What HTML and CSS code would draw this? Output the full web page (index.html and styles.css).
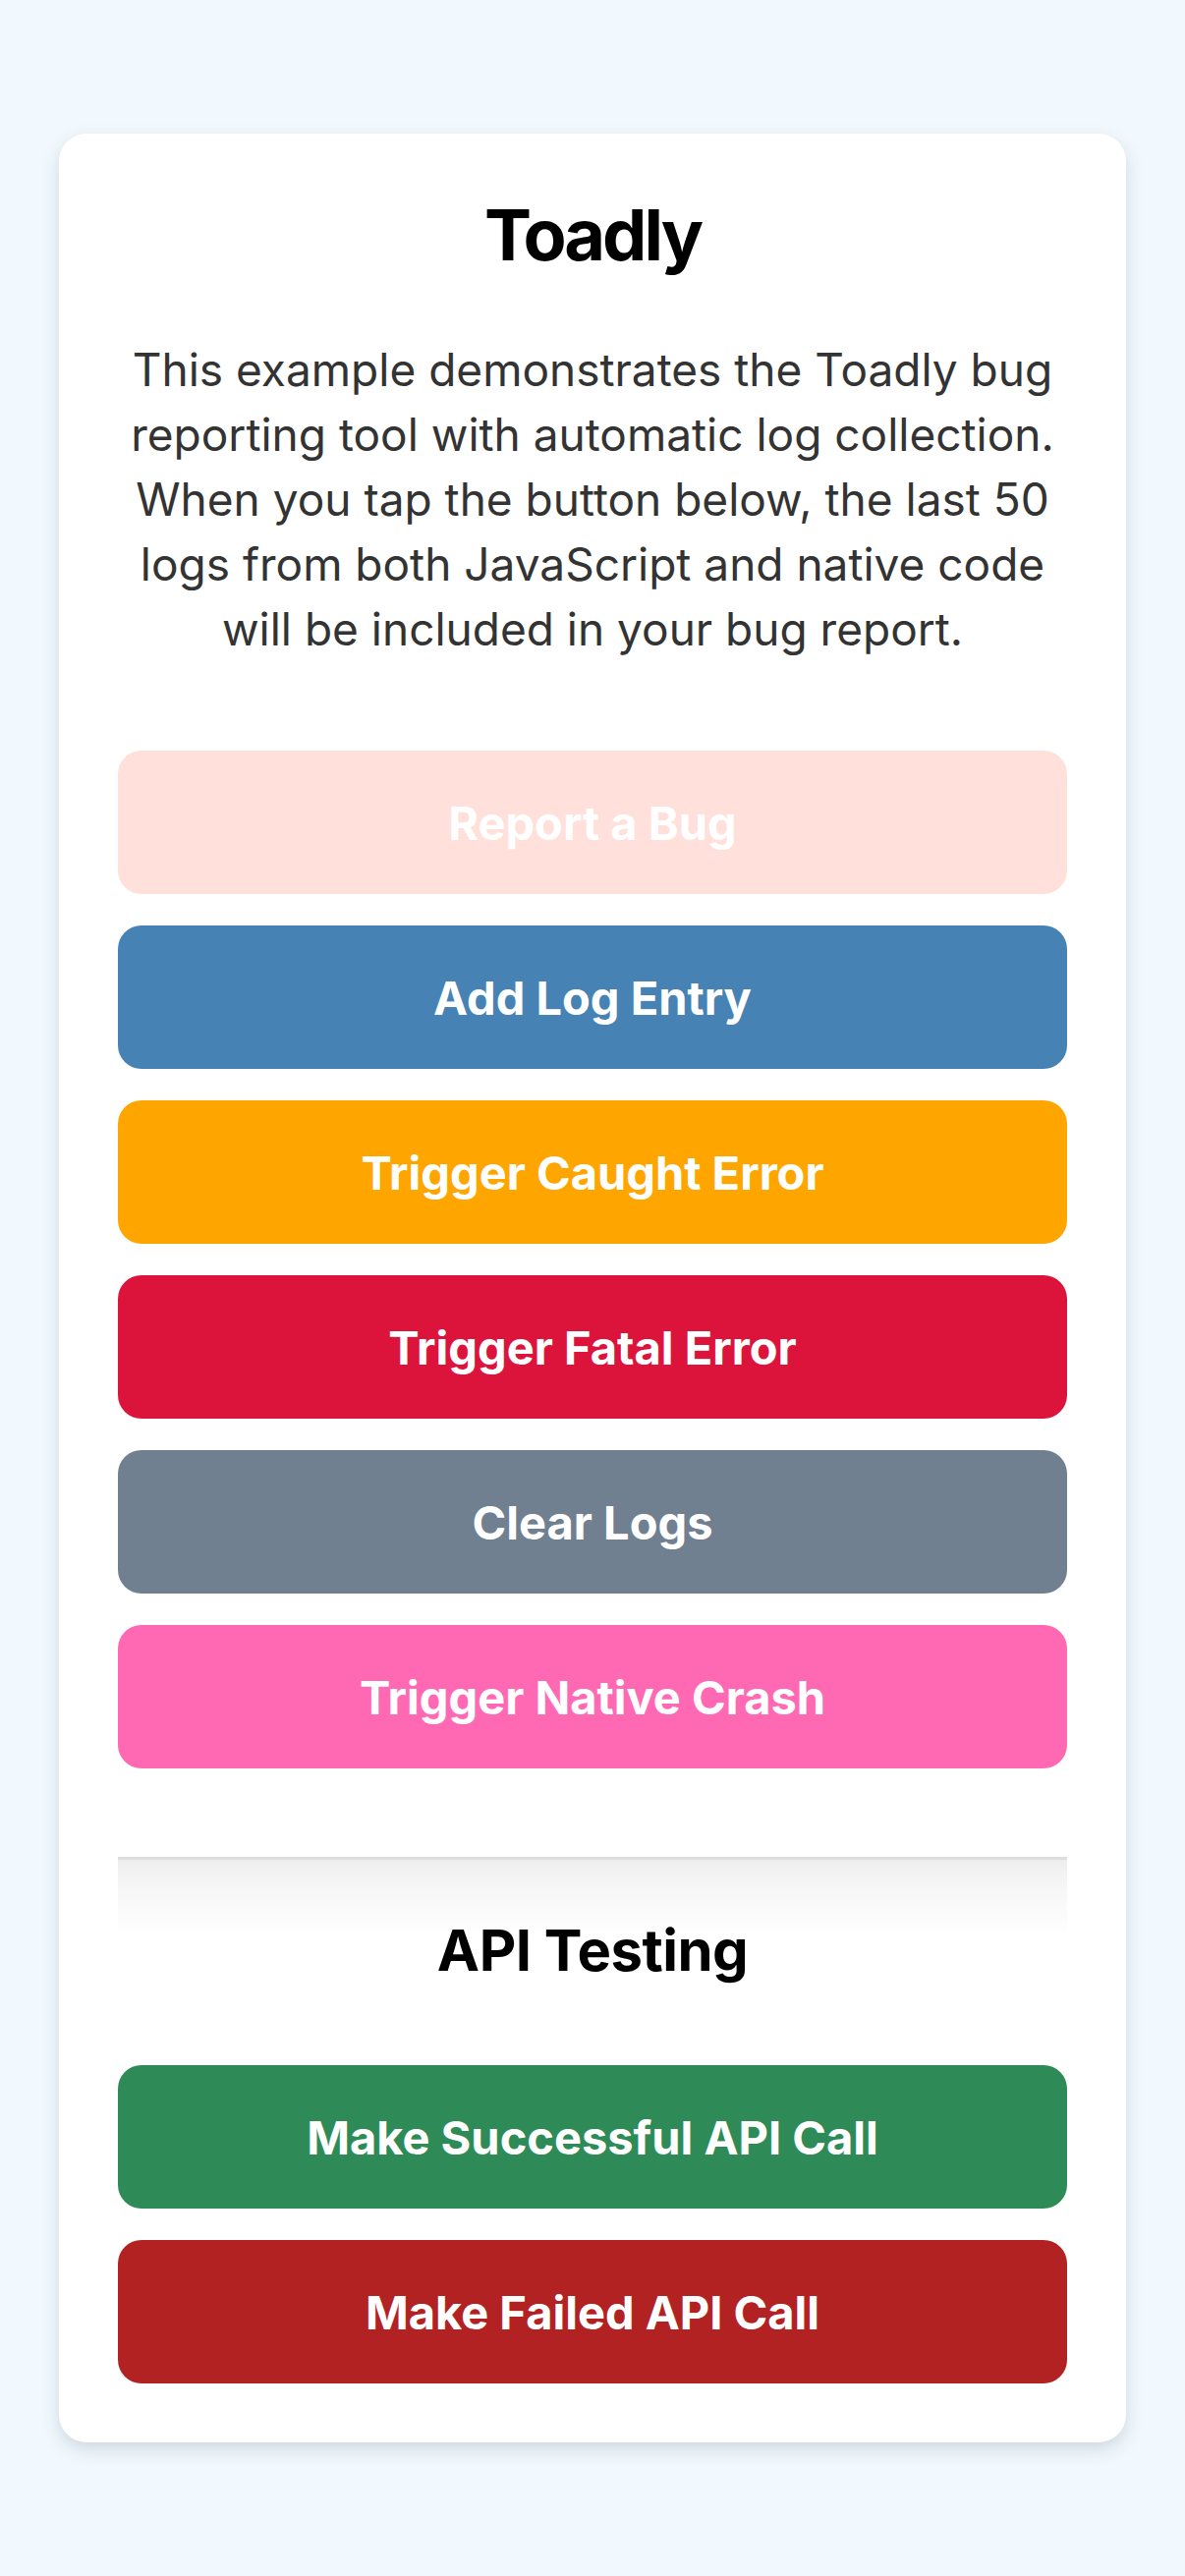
FILE: index.html
```html
<!DOCTYPE html>
<html lang="en">
<head>
<meta charset="utf-8">
<title>Toadly</title>
<link rel="stylesheet" href="styles.css">
</head>
<body>
<main class="screen">
  <section class="card">
    <h1 class="title">Toadly</h1>
    <p class="intro">This example demonstrates the Toadly bug reporting tool with automatic log collection. When you tap the button below, the last 50 logs from both JavaScript and native code will be included in your bug report.</p>
    <div class="buttons">
      <button class="btn btn-report" disabled>Report a Bug</button>
      <button class="btn btn-log">Add Log Entry</button>
      <button class="btn btn-caught">Trigger Caught Error</button>
      <button class="btn btn-fatal">Trigger Fatal Error</button>
      <button class="btn btn-clear">Clear Logs</button>
      <button class="btn btn-native">Trigger Native Crash</button>
    </div>
    <div class="api-section">
      <h2 class="subtitle">API Testing</h2>
      <div class="buttons">
        <button class="btn btn-success">Make Successful API Call</button>
        <button class="btn btn-failed">Make Failed API Call</button>
      </div>
    </div>
  </section>
</main>
</body>
</html>
```

FILE: styles.css
```css
* { box-sizing: border-box; }

html, body {
  margin: 0;
  padding: 0;
}

body {
  background: #f1f9fe;
  font-family: Inter, "Noto Sans", "Liberation Sans", sans-serif;
  min-height: 2622px;
}

.screen {
  padding: 136px 60px 0;
}

.card {
  background: #ffffff;
  border-radius: 28px;
  padding: 60px;
  box-shadow: 0 7px 18px rgba(40, 60, 80, 0.17);
}

.title {
  margin: 0 0 61px;
  font-size: 72px;
  line-height: 86px;
  font-weight: 700;
  color: #000;
  text-align: center;
  letter-spacing: -3px;
}

.intro {
  margin: 0 0 91px;
  font-size: 46px;
  line-height: 66px;
  color: #333333;
  text-align: center;
  font-weight: 400;
}

.buttons {
  display: flex;
  flex-direction: column;
  gap: 32px;
}

.btn {
  display: block;
  width: 100%;
  border: none;
  border-radius: 24px;
  padding: 0;
  height: 146px;
  font-family: inherit;
  font-size: 47px;
  font-weight: 700;
  color: #ffffff;
  text-align: center;
  cursor: pointer;
}

.btn-report { background: #ffe0da; color: #ffffff; }
.btn-log { background: #4682b4; }
.btn-caught { background: #ffa500; }
.btn-fatal { background: #dc143c; }
.btn-clear { background: #708090; }
.btn-native { background: #ff69b4; }
.btn-success { background: #2e8b57; }
.btn-failed { background: #b22222; }

.api-section {
  margin-top: 90px;
  border-top: 3px solid #dedede;
  padding-top: 57px;
  background: linear-gradient(to bottom, #ededed 0px, #f3f3f3 14px, #f8f8f8 38px, #fcfcfc 62px, #ffffff 80px) no-repeat;
  background-size: 100% 80px;
}

.subtitle {
  margin: 0 0 82px;
  font-size: 58px;
  line-height: 70px;
  font-weight: 700;
  color: #000;
  text-align: center;
  letter-spacing: -0.5px;
}
```
